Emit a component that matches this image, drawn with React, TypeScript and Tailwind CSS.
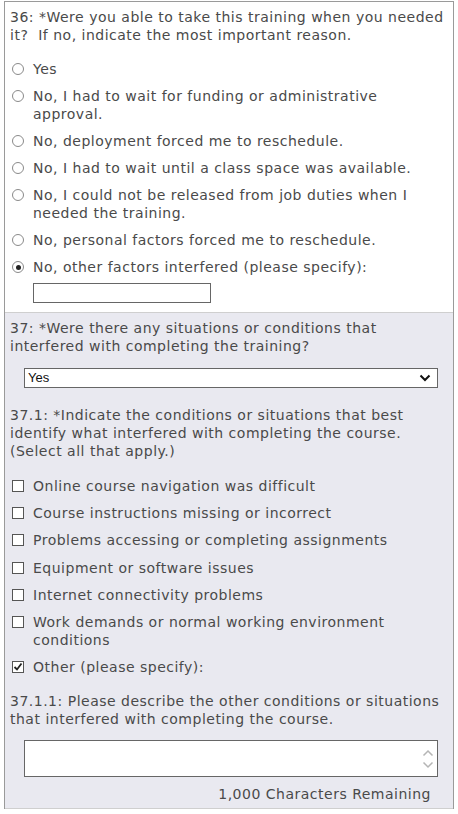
import React from 'react'

const font = "font-['DejaVu_Sans',Verdana,sans-serif]"

function Radio({ checked }: { checked?: boolean }) {
  return (
    <span className="mt-[3px] flex h-[12px] w-[12px] shrink-0 items-center justify-center rounded-full border border-[#8a8a8a] bg-white">
      {checked && <span className="h-[5px] w-[5px] rounded-full bg-[#222]" />}
    </span>
  )
}

function Check({ checked }: { checked?: boolean }) {
  return (
    <span className="mt-[3px] flex h-[12px] w-[12px] shrink-0 items-center justify-center border border-[#555] bg-white">
      {checked && (
        <svg width="10" height="10" viewBox="0 0 10 10">
          <path d="M1.5 5 L4 7.5 L8.5 1.5" fill="none" stroke="#222" strokeWidth="1.8" />
        </svg>
      )}
    </span>
  )
}

const radios: { lines: string[]; checked?: boolean }[] = [
  { lines: ['Yes'] },
  { lines: ['No, I had to wait for funding or administrative', 'approval.'] },
  { lines: ['No, deployment forced me to reschedule.'] },
  { lines: ['No, I had to wait until a class space was available.'] },
  { lines: ['No, I could not be released from job duties when I', 'needed the training.'] },
  { lines: ['No, personal factors forced me to reschedule.'] },
  { lines: ['No, other factors interfered (please specify):'], checked: true },
]

const checks: { lines: string[]; checked?: boolean }[] = [
  { lines: ['Online course navigation was difficult'] },
  { lines: ['Course instructions missing or incorrect'] },
  { lines: ['Problems accessing or completing assignments'] },
  { lines: ['Equipment or software issues'] },
  { lines: ['Internet connectivity problems'] },
  { lines: ['Work demands or normal working environment', 'conditions'] },
  { lines: ['Other (please specify):'], checked: true },
]

function Lines({ lines }: { lines: string[] }) {
  return (
    <div className="flex flex-col">
      {lines.map((l, i) => (
        <span key={i} className="whitespace-pre">{l}</span>
      ))}
    </div>
  )
}

export default function App() {
  return (
    <div className={`min-h-[814px] bg-white pt-[1px] ${font} text-[14px] leading-[18px] tracking-[0.5px] text-[#4a4a4a]`}>
      <div className="ml-[4px] w-[450px] border-x border-t border-[#9a9a9a]">
        {/* question 36 */}
        <div className="px-[5px] pt-[6px] pb-[9px]">
          <Lines lines={['36: *Were you able to take this training when you needed', 'it?  If no, indicate the most important reason.']} />
          <div className="mt-[16px] flex flex-col gap-[9px]">
            {radios.map((r, i) => (
              <div key={i} className="flex gap-[9px] pl-[2px]">
                <Radio checked={r.checked} />
                <Lines lines={r.lines} />
              </div>
            ))}
          </div>
          <div className="ml-[23px] mt-[7px] h-[20px] w-[178px] border border-[#666] bg-white" />
        </div>

        {/* question 37 */}
        <div className="border-t border-[#cfcfcf] bg-[#e9e9f0] px-[5px] pt-[6px] pb-[4px]">
          <Lines lines={['37: *Were there any situations or conditions that', 'interfered with completing the training?']} />
          <div className="ml-[14px] mt-[13px] flex h-[20px] w-[414px] items-center justify-between border border-[#666] bg-white pl-[3px] pr-[6px] font-['Liberation_Sans',Arial,sans-serif] text-[13px] tracking-normal text-[#111]">
            <span>Yes</span>
            <svg width="12" height="8" viewBox="0 0 12 8">
              <path d="M1.5 1.5 L6 6 L10.5 1.5" fill="none" stroke="#111" strokeWidth="2" />
            </svg>
          </div>

          <div className="mt-[18px]">
            <Lines lines={['37.1: *Indicate the conditions or situations that best', 'identify what interfered with completing the course.', '(Select all that apply.)']} />
          </div>
          <div className="mt-[17px] flex flex-col gap-[9.2px]">
            {checks.map((c, i) => (
              <div key={i} className="flex gap-[9px] pl-[2px]">
                <Check checked={c.checked} />
                <Lines lines={c.lines} />
              </div>
            ))}
          </div>

          <div className="mt-[16px]">
            <Lines lines={['37.1.1: Please describe the other conditions or situations', 'that interfered with completing the course.']} />
          </div>
          <div className="ml-[14px] mt-[12px] flex h-[37px] w-[414px] justify-end border border-[#666] bg-white pr-[2px]">
            <div className="flex flex-col items-center justify-center gap-[4px] pr-[1px]">
              <svg width="12" height="8" viewBox="0 0 12 8">
                <path d="M1.5 6.5 L6 2 L10.5 6.5" fill="none" stroke="#b5b5b5" strokeWidth="1.5" />
              </svg>
              <svg width="12" height="8" viewBox="0 0 12 8">
                <path d="M1.5 1.5 L6 6 L10.5 1.5" fill="none" stroke="#b5b5b5" strokeWidth="1.5" />
              </svg>
            </div>
          </div>
          <div className="mt-[8px] pb-[1px] pr-[17px] text-right">1,000 Characters Remaining</div>
        </div>
        <div className="border-t border-[#cfcfcf]" />
      </div>
    </div>
  )
}
